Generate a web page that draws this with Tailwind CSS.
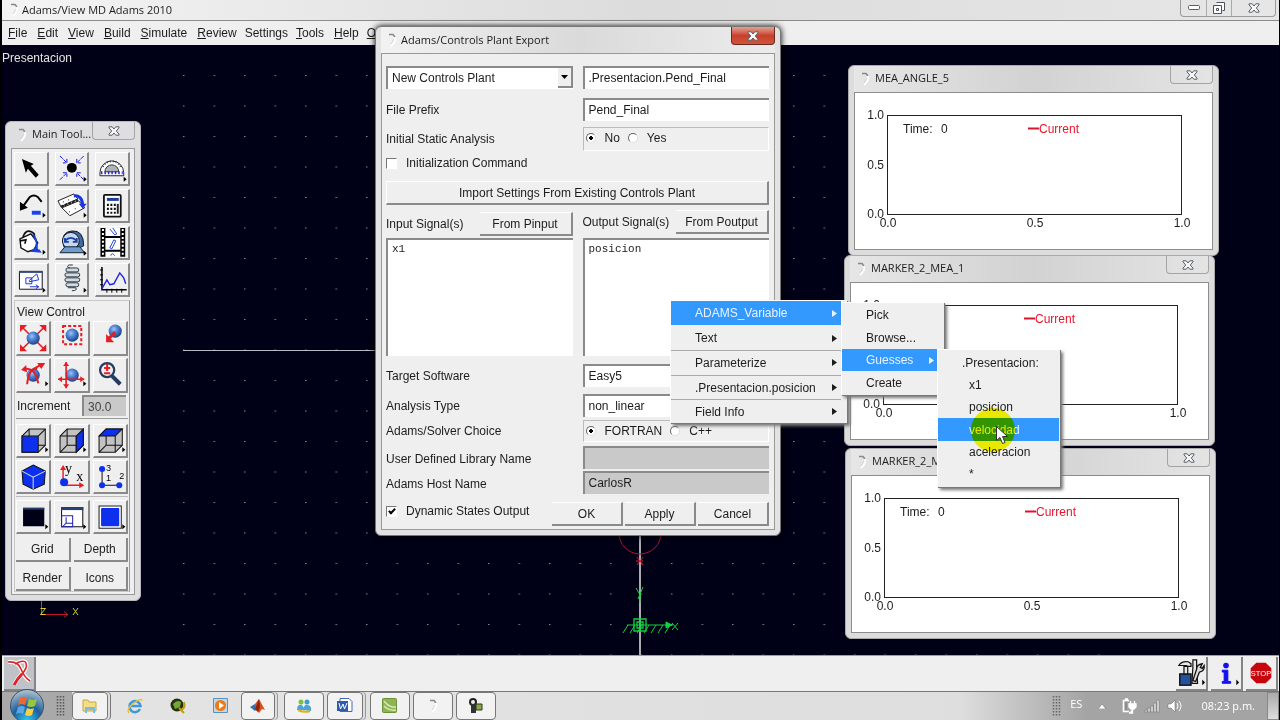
<!DOCTYPE html>
<html lang="es">
<head>
  <meta charset="UTF-8" />
  <meta name="viewport" content="width=device-width, initial-scale=1.0" />
  <title>Adams/View MD Adams 2010</title>
  <script src="https://cdn.jsdelivr.net/npm/@tailwindcss/browser@4"></script>
</head>
<body class="relative flex h-screen flex-col overflow-hidden bg-black font-['Liberation_Sans',Arial,sans-serif] text-[12px] leading-4 text-[#1c1c1c]">

  <!-- shared shapes -->
  <svg class="absolute size-0">
    <symbol id="arrow" viewBox="0 0 5 7"><path d="M0 0 L5 3.5 L0 7Z" fill="currentColor"/></symbol>
    <symbol id="close" viewBox="0 0 12 10">
      <path d="M1 .8h3.2L6 3l1.800-2.200H11v1L8.300 5 11 8.200v1H7.800L6 7 4.200 9.200H1v-1L3.700 5 1 1.800Z" fill="#f6f6f6" stroke="#5a5e66"/>
    </symbol>
    <symbol id="app" viewBox="0 0 12 14">
      <path d="M3 1.500 L7 1.500 L9 4" fill="none" stroke="#888" stroke-width="1.500"/>
      <path d="M9 4 Q10 9 5 13" fill="none" stroke="#fff" stroke-width="2"/>
      <path d="M8 6 L5 11" fill="none" stroke="#d4d4d4"/>
    </symbol>
    <radialGradient id="ball" cx=".4" cy=".35" r=".7"><stop offset="0" stop-color="#9fc4f4"/><stop offset=".4" stop-color="#4f86d6"/><stop offset="1" stop-color="#173a7c"/></radialGradient>
    <symbol id="plot" viewBox="0 0 358 156">
      <rect x="32.500" y="22.500" width="294" height="99" fill="none" stroke="#222"/>
      <g font-size="12" fill="#1c1c1c">
        <text x="29" y="26" text-anchor="end">1.0</text>
        <text x="29" y="76" text-anchor="end">0.5</text>
        <text x="29" y="125" text-anchor="end">0.0</text>
        <text x="33" y="134" text-anchor="middle">0.0</text>
        <text x="180" y="134" text-anchor="middle">0.5</text>
        <text x="327" y="134" text-anchor="middle">1.0</text>
        <text x="48" y="40">Time:</text>
        <text x="86" y="40">0</text>
      </g>
      <path d="M173 35.500h11" stroke="#d8152c" stroke-width="2"/>
      <text x="184" y="40" font-size="12" fill="#ec142c">Current</text>
    </symbol>
  </svg>

  <!-- title bar -->
  <header class="mr-px ml-[2px] flex h-[21px] shrink-0 items-center border-b border-[#8b8b8b] bg-linear-to-r from-[#f4f4f4] via-[#dcdcdc] to-[#e6e6e6] pl-1.5">
    <svg class="h-3.5 w-3"><use href="#app"/></svg>
    <h1 class="ml-[2px] font-['Open_Sans',sans-serif] text-[11px]">Adams/View MD Adams 2010</h1>
    <div class="mr-[3px] ml-auto flex h-[17px] self-start rounded-b border border-t-0 border-[#9a9a9a]">
      <button aria-label="Minimizar" class="grid w-[26px] place-items-center border-r border-[#aaa]"><svg width="12" height="6"><rect x=".5" y=".5" width="11" height="4" rx="1" fill="#fff" stroke="#5a5e66"/></svg></button>
      <button aria-label="Restaurar" class="grid w-[25px] place-items-center border-r border-[#aaa]"><svg width="12" height="12"><path d="M3.500 .5h8v8h-2M.5 3.500h8v8h-8zM3.500 6.500h2v2h-2z" fill="#fff" stroke="#4d515c"/></svg></button>
      <button aria-label="Cerrar" class="grid w-[43px] place-items-center"><svg class="h-2.5 w-3"><use href="#close"/></svg></button>
    </div>
  </header>

  <nav class="mr-px ml-[2px] flex h-6 shrink-0 items-center gap-[10px] bg-[#efefef] pb-px pl-1.5">
    <a href="#"><u>F</u>ile</a><a href="#"><u>E</u>dit</a><a href="#"><u>V</u>iew</a><a href="#"><u>B</u>uild</a><a href="#"><u>S</u>imulate</a><a href="#"><u>R</u>eview</a><a href="#" class="-mx-[2px]">Settings</a><a href="#"><u>T</u>ools</a><a href="#"><u>H</u>elp</a><a href="#" class="-ml-[2px]"><u>O</u></a>
  </nav>

  <!-- model view -->
  <main class="relative mr-px ml-[2px] min-h-0 flex-1 overflow-hidden bg-[#000016] text-[#e4e4e4]">
    <p class="pt-[5px]">Presentacion</p>
    <svg class="absolute top-0 left-0 h-full w-full">
      <defs><pattern id="grid" x="181" y="30" width="30.500" height="30.500" patternUnits="userSpaceOnUse"><rect width="1.500" height="1" fill="#85859a"/></pattern></defs>
      <rect x="181" y="30" width="917" height="590" fill="url(#grid)"/>
      <path d="M181 305.500H400" stroke="#b8b8c0"/>
      <path d="M638 480V615" stroke="#a9a9ae" stroke-width="2"/>
      <circle cx="638" cy="488" r="21" fill="none" stroke="#b0142c"/>
      <path d="M635 512l6 8m0-8l-6 8m-1-4h7" stroke="#e01c34" fill="none"/>
      <g fill="none" stroke="#12d43c">
        <path d="M634 543l3 5m4-6l-5 12M638 549v8"/>
        <path d="M625 580h46M626 580l-5 8m12-8l-5 8m12-8l-5 8m12-8l-5 8m12-8l-5 8m12-8l-5 8m12-8l-5 8"/>
        <path d="M632 574h12v12h-12zM635 577h6v6h-6zM638 574v12" stroke-width="1.300"/>
        <path d="M670 578l6 7m0-7l-6 7"/>
        <path d="M664 577l6 3-6 3z" fill="#12d43c"/>
      </g>
      <path d="M39.500 553v16" stroke="#1c9a35"/>
      <path d="M40 569.500h26m-4-3l4 3-4 3" stroke="#c01828" fill="none"/>
      <path d="M38.500 563.500h5l-5 6h5M71 563l5 7m0-7l-5 7" stroke="#d6d22c" fill="none"/>
    </svg>
  </main>

  <!-- status bar -->
  <section class="mr-px ml-[2px] flex h-9 shrink-0 items-center border-t border-[#9c9cac] bg-[#efefef] pr-px pl-[2px]">
    <button aria-label="Seleccionar" class="h-[34px] w-8 border-r-2 border-b-2 border-[#858585] bg-[#bfc2c7]">
      <svg viewBox="0 0 30 32"><path d="M4 5Q14 4 17 12 20 20 26 24M11 7Q20 2 22 6 24 11 17 18 13 22 10 28" fill="none" stroke="#fff" stroke-width="4"/><path d="M4 5Q14 4 17 12 20 20 26 24M11 7Q20 2 22 6 24 11 17 18" fill="none" stroke="#d8262c" stroke-width="1.600"/><path d="M18 17Q13 22 10 28" stroke="#d8262c" stroke-width="3" fill="none"/></svg>
    </button>
    <div class="ml-auto flex gap-[3px]">
      <button aria-label="Herramientas" class="h-[34px] w-8 border-r-2 border-b-2 border-[#858585]">
        <svg viewBox="0 0 32 32"><rect x="4" y="17" width="12" height="12" fill="#26509a" stroke="#111" stroke-width="1.500"/><path d="M8.500 9h4v8h-4zM3 8Q6 3 13 4l3 2v3h-3l-2-1H6Zm15-6h4v8l1 17h-6l1-17Z" fill="#e8e8e8" stroke="#111" stroke-width="1.300"/><path d="M30 8q1 6-5 7l-4 10-3-1 4-12q0-5 6-6l-2 4 2 1Z" fill="#ddd" stroke="#111" stroke-width="1.400"/><path d="M28 23l3 3-3 3z"/></svg>
      </button>
      <button aria-label="Información" class="h-[34px] w-8 border-r-2 border-b-2 border-[#858585]">
        <svg viewBox="0 0 32 32"><circle cx="16" cy="8" r="3" fill="#1010f0"/><path d="M12 13h6v12h3v2h-9v-2h2V15h-2z" fill="#1010f0" stroke="#1010f0"/><path d="M27 23l3 3-3 3z"/></svg>
      </button>
      <button aria-label="Stop" class="h-[34px] w-8 border-r-2 border-b-2 border-[#858585]">
        <svg viewBox="0 0 32 32"><path d="M11 5h10l6 6v10l-6 6H11l-6-6V11z" fill="#c8040c"/><text x="16" y="19" font-size="8" fill="#fff" text-anchor="middle">STOP</text></svg>
      </button>
    </div>
  </section>

  <!-- windows taskbar -->
  <footer class="mr-px ml-[2px] flex h-[29px] shrink-0 border-t border-[#777] bg-linear-to-r from-[#e4e4e4] via-[#dedede] via-75% to-[#a4a4a4] to-85% font-['Open_Sans',sans-serif]">
    <div class="flex w-[70px] shrink-0 items-center bg-[#a9a9a9] pl-2">
      <button aria-label="Inicio" class="z-10 -my-2 w-[34px]">
        <svg viewBox="0 0 34 34"><defs><radialGradient id="orb" cx=".5" cy=".95" r=".9"><stop offset="0" stop-color="#35c8f4"/><stop offset=".5" stop-color="#1c5f9c"/><stop offset="1" stop-color="#a8bccc"/></radialGradient></defs><circle cx="17" cy="17" r="16.500" fill="url(#orb)" stroke="#38536b"/><path d="M10 9q4-2 7 0l-2 7q-3-2-7 0z" fill="#ee6634"/><path d="M19 10q4 2 8 0l-2 7q-4 2-8 0z" fill="#96c83c"/><path d="M8 18q4-2 7 0l-2 7q-3-2-7 0z" fill="#58a8e8"/><path d="M17 19q4 2 7 0l-2 7q-3 2-7 0z" fill="#fcd03c"/></svg>
      </button>
      <svg class="ml-3" width="9" height="20"><path d="M1.500 0v20M4.500 0v20M7.500 0v20" stroke="#555" stroke-width="1.500" stroke-dasharray="1.500 1.500"/></svg>
    </div>
    <div class="flex gap-[3px]">
      <button aria-label="Explorador" class="grid w-9 place-items-center rounded-sm border border-[#777] bg-[#f2f2f2] shadow-[2px_0_0_#ddd,3px_0_0_#777]">
        <svg width="16" height="16"><path d="M1 2h5l1 2h7v9H1z" fill="#f4de84" stroke="#c8a848"/><path d="M3 15V9h10v6h-2v-3H5v3z" fill="#79bce4"/></svg>
      </button>
      <button aria-label="Internet Explorer" class="grid w-10 place-items-center">
        <svg class="ml-[8px]" width="16" height="16"><path d="M13 11A5.500 5.500 0 1 1 13.500 8H4" fill="none" stroke="#3c9ad8" stroke-width="2.500"/><path d="M2 15Q-1 11 7 5 15-1 15 3" fill="none" stroke="#efbf3c" stroke-width="1.500"/></svg>
      </button>
      <button aria-label="Reproductor" class="grid w-10 place-items-center">
        <svg class="ml-[8px]" width="16" height="16"><circle cx="7" cy="7" r="6.500" fill="#26320e"/><path d="M3 6q4-5 8-2l-1 5-5 2z" fill="#72a83a"/><path d="M10 12q6-1 4-8M9 10l5 5" stroke="#bd9e14" stroke-width="2" fill="none"/></svg>
      </button>
      <button aria-label="Media Player" class="grid w-10 place-items-center">
        <svg class="ml-[8px]" width="16" height="16"><path d="M.5 .5h14v14H.5z" fill="#bcd9ec" stroke="#5794bd"/><circle cx="7.500" cy="7.500" r="5.500" fill="#ee7916"/><path d="M6 4l5 3.500L6 11z" fill="#fff"/></svg>
      </button>
      <button aria-label="MATLAB" class="ml-px mr-[6px] grid w-[34px] place-items-center rounded-sm border border-[#777] bg-[#f2f2f2] shadow-[2px_0_0_#ddd,3px_0_0_#999]">
        <svg width="16" height="16"><path d="M0 9l5-3 3 4-3 3z" fill="#3a6ea8"/><path d="M5 6l4-5 6 11-3-1-3 4-4-4z" fill="#d9501c"/><path d="M9 1l1 8-2 5-3-3z" fill="#8a2413"/></svg>
      </button>
      <button aria-label="Messenger" class="grid w-10 place-items-center rounded-sm border border-[#777] bg-[#f2f2f2]">
        <svg width="16" height="16"><circle cx="5" cy="4" r="2.500" fill="#7dc142"/><circle cx="11" cy="4" r="2.500" fill="#3f9bd0"/><path d="M1 12q0-6 5-5l3 5zM7 12q1-6 5-5 4 1 3 6z" fill="#4aa6d6"/><path d="M2 12q6 3 12 1" stroke="#dcae24" stroke-width="2" fill="none"/></svg>
      </button>
      <button aria-label="Word" class="mr-[4px] grid w-9 place-items-center rounded-sm border border-[#777] bg-[#f2f2f2] shadow-[2px_0_0_#ddd,3px_0_0_#999]">
        <svg width="16" height="16"><path d="M3 .5h9l3 3v10H3z" fill="#fff" stroke="#416ab5"/><rect y="3" width="11" height="10" fill="#2f5ba8"/><path d="M2 5l1.500 6L6 6l1.500 5L10 5" stroke="#fff" fill="none"/></svg>
      </button>
      <button aria-label="Camtasia" class="grid w-10 place-items-center rounded-sm border border-[#777] bg-[#f2f2f2]">
        <svg width="16" height="16"><rect x=".5" y=".5" width="14" height="14" rx="1" fill="#8eb453" stroke="#6c9136"/><path d="M2 3q5 7 12 6M2 8q5 5 12 4" stroke="#d8e8b8" fill="none" stroke-width="1.500"/></svg>
      </button>
      <button aria-label="Adams" class="grid w-10 place-items-center rounded-sm border border-[#777] bg-[#f2f2f2]"><svg class="h-3.5 w-3"><use href="#app"/></svg></button>
      <button aria-label="Grabadora" class="grid w-10 place-items-center rounded-sm border border-[#777] bg-[#f2f2f2]">
        <svg width="16" height="16"><circle cx="5" cy="4" r="3" fill="#eee" stroke="#222" stroke-width="2"/><path d="M3 6h5v9H3z" fill="#333"/><path d="M8 6h6v6H8z" fill="#88ac3c" stroke="#333"/></svg>
      </button>
    </div>
    <div class="ml-auto flex items-center text-[11px] text-white">
      <svg width="9" height="20"><path d="M1.500 0v20M4.500 0v20M7.500 0v20" stroke="#666" stroke-width="1.500" stroke-dasharray="1.500 1.500"/></svg>
      <span class="ml-[9px] pb-1">ES</span>
      <svg class="ml-[16px]" width="8" height="5"><path d="M4 0l4 5H0z" fill="#fff" stroke="#666" stroke-width=".5"/></svg>
      <svg class="ml-[16px]" width="15" height="16"><path d="M7 2.500H1.500v11H7M3 1h3" fill="none" stroke="#fff" stroke-width="1.600"/><path d="M7 6h7v3l-2 2H9L7 9zM8.500 3v3m4-3v3M10.500 11v4H7" fill="#fff" stroke="#fff" stroke-width="1.300"/><path d="M4 4v8" stroke="#777"/></svg>
      <svg class="ml-[7px]" width="16" height="14"><path d="M1 11h2v2H1zM4 9h2v4H4zM7 7h2v6H7zM10 4h2v9h-2zM13 1h2v12h-2z" fill="#eee" stroke="#666" stroke-width=".5"/></svg>
      <svg class="ml-[7px]" width="16" height="14"><path d="M1 5h3l4-4v12L4 9H1z" fill="#fff" stroke="#666" stroke-width=".5"/><path d="M10 4q2 3 0 6M12 2q4 5 0 10" fill="none" stroke="#fff"/></svg>
      <time class="ml-[18px]">08:23 p.m.</time>
      <button aria-label="Mostrar escritorio" class="ml-[12px] h-7 w-3 border border-[#888] bg-linear-to-b from-[#aaa] to-[#ddd]"></button>
    </div>
  </footer>

  <!-- main toolbox -->
  <aside class="absolute top-[121px] left-[5px] w-[136px] rounded-md border border-[#b8b8bc] bg-[#dedee0] px-[5px] pb-[5px]">
    <div class="flex h-[26px] pl-[5px]">
      <svg class="mt-1.5 h-3.5 w-3"><use href="#app"/></svg>
      <h2 class="mt-1 ml-1 font-['Open_Sans',sans-serif] text-[11px]">Main Tool...</h2>
      <button aria-label="Cerrar" class="ml-auto grid h-[18px] w-[43px] place-items-center rounded-b border border-t-0 border-[#a4a4a4]"><svg class="h-2.5 w-3"><use href="#close"/></svg></button>
    </div>
    <div class="border border-[#999] bg-[#efefef] pt-[3px] pr-[4px] pb-[2px] pl-[2px]">
      <div class="grid grid-cols-3 gap-x-[6px] gap-y-[3px] *:h-[34px] *:border-t *:border-r-2 *:border-b-2 *:border-l *:border-t-white *:border-r-[#8a8a8a] *:border-b-[#8a8a8a] *:border-l-white">
        <button aria-label="Select"><svg viewBox="0 0 32 32"><path d="M7 6l12 5-3 2 8 9-3 3-8-9-2 4z"/></svg></button>
        <button aria-label="Point"><svg viewBox="0 0 32 32"><circle cx="16" cy="15" r="5"/><path d="M4 3l7 7m0-4v4H7M28 3l-7 7m0-4v4h4M4 27l7-7m-4 0h4v4M28 27l-7-7m4 0h-4v4" fill="none" stroke="#1414e0" stroke-dasharray="4 1"/><path d="M28 24l3 2.500-3 2.500z"/></svg></button>
        <button aria-label="Measure"><svg viewBox="0 0 32 32"><path d="M4 23V20a12 12 0 0 1 24 0v3z" fill="#fff" stroke="#223"/><path d="M9 19a7 7 0 0 1 14 0z" fill="#b0b4b8" stroke="#333"/><path d="M5 20h22" stroke="#2424d0" stroke-width="3" stroke-dasharray="1.500 2"/><path d="M7 14a10 10 0 0 1 18 0" fill="none" stroke="#444" stroke-width="2" stroke-dasharray="1 2"/><path d="M28 24l3 2.500-3 2.500z"/></svg></button>
        <button aria-label="Undo"><svg viewBox="0 0 32 32"><path d="M7 18L15 7Q19 4 23 7L27 12" fill="none" stroke="#000" stroke-width="2"/><path d="M5 12v9l8-3z"/><path d="M17 21h9v4h-9z" fill="#1846ee"/><path d="M28 23l3 2.500-3 2.500z"/></svg></button>
        <button aria-label="Joint"><svg viewBox="0 0 32 32"><path d="M6 18l17-7 6 7-15 8z" fill="#fff" stroke="#222"/><path d="M2 11l16-7 4 5-17 8z" fill="#fff" stroke="#222"/><path d="M5 17l17-7" stroke="#222" stroke-width="2.500" stroke-dasharray="3 1"/><path d="M7 12h1m4-2h1m0 12h1m5-3h1" stroke="#222"/><path d="M18 6q8-1 9 9" fill="none" stroke="#1836e4" stroke-width="3"/><path d="M23 14h8l-4 5z" fill="#1836e4"/><path d="M28 23l3 2.500-3 2.500z"/></svg></button>
        <button aria-label="Calculator"><svg viewBox="0 0 32 32"><rect x="8" y="5" width="17" height="22" rx="1" fill="#fff" stroke="#111" stroke-width="1.800"/><path d="M11 9.500h12" stroke="#203b9a" stroke-width="3"/><path d="M11 15h9M11 19h9M11 23h9" stroke="#111" stroke-width="2.200" stroke-dasharray="2 1.500"/><path d="M22 14v10" stroke="#223" stroke-width="2"/></svg></button>
        <button aria-label="Color"><svg viewBox="0 0 32 32"><path d="M5 12l11-5 7 9-4 7-6 2-7-4z" fill="#fff" stroke="#111" stroke-width="1.400"/><path d="M8 11q2-9 9-6 4 2 2 5M5 14l6-1-1 4" fill="none" stroke="#111" stroke-width="1.700"/><path d="M17 6q7 4 6 17h-3l1-7z" fill="#1a42d8"/><path d="M15 25l5-4 5 2 2 3z" fill="#1a42d8"/><path d="M28 23l3 2.500-3 2.500z"/></svg></button>
        <button aria-label="Motion"><svg viewBox="0 0 32 32"><path d="M8 20Q4 5 16 4t12 15l-6 3z" fill="#426c9f" stroke="#112"/><circle cx="15" cy="14" r="8.500" fill="#c8d8ec" stroke="#112"/><path d="M4 26l5-6h15l5 6z" fill="#719bcb" stroke="#123"/><path d="M9 14q6-6 12 0m-12-3v4h4m8-4v4h-4" fill="none" stroke="#1440a8" stroke-width="1.800"/><path d="M28 24l3 2.500-3 2.500z"/></svg></button>
        <button aria-label="Animation"><svg viewBox="0 0 32 32"><path d="M5 1h24v29H5z" fill="#fff"/><path d="M7 1v29M27 1v29" stroke="#000" stroke-width="5"/><path d="M7 2v28M27 2v28" stroke="#fff" stroke-width="2" stroke-dasharray="2 2"/><path d="M9 10h16M9 24h16" stroke="#000" stroke-width="2"/><path d="M14 2l5 6 2-1-4-6M14 21l4-8 2 1-4 8zM15 29q1-4 4 0" fill="none" stroke="#2446dd"/></svg></button>
        <button aria-label="Simulation"><svg viewBox="0 0 32 32"><path d="M4.500 7.500h23v18h-23z" fill="#fff" stroke="#112"/><path d="M4 8h24" stroke="#334a78" stroke-width="2"/><path d="M11 14h6v6h-6zM14 17l8-7 2 6-10 2M15 23h9m-3-2l3 2-3 2" fill="none" stroke="#1e36da"/><path d="M28 24l3 2.500-3 2.500z"/></svg></button>
        <button aria-label="Spring"><svg viewBox="0 0 32 32"><g fill="#d3dbe0" stroke="#2a3a44"><rect x="10" y="4" width="13" height="4" rx="2"/><rect x="9" y="9" width="15" height="4" rx="2"/><rect x="9" y="14" width="15" height="4" rx="2"/><rect x="10" y="19" width="13" height="4" rx="2"/><path d="M12 24h8q2 3-4 3M14 4q-4-1-1-3h4" fill="none"/></g><path d="M28 24l3 2.500-3 2.500z"/></svg></button>
        <button aria-label="Plotting"><svg viewBox="0 0 32 32"><path d="M6 3v23h25" fill="none" stroke="#000" stroke-width="1.500"/><path d="M4 6h3M4 11h3M4 16h3M4 21h3m4 4v4m5-4v4m5-4v4m5-4v4" stroke="#000"/><path d="M6 25l5-9 3 5 4-1 6-11 4 5 2 6" fill="none" stroke="#1c22dd" stroke-width="1.400"/></svg></button>
      </div>
      <div class="mt-[3px] border border-[#c8c8c8] border-r-[#999] px-px">
        <h3 class="mt-[3px] h-[17px] pl-px">View Control</h3>
        <div class="grid grid-cols-3 gap-x-[3px] gap-y-[2px] *:h-[35px] *:border-t *:border-r-2 *:border-b-2 *:border-l *:border-t-white *:border-r-[#8a8a8a] *:border-b-[#8a8a8a] *:border-l-white">
          <button aria-label="Fit"><svg viewBox="0 0 32 32"><g stroke="#e81c24" stroke-width="1.600" fill="none"><path d="M4 4l24 24M28 4L4 28"/></g><path d="M3 3h7l-7 7zM29 3h-7l7 7zM3 29h7l-7-7zM29 29h-7l7-7z" fill="#e81c24"/><circle cx="16" cy="16" r="6.500" fill="url(#ball)"/></svg></button>
          <button aria-label="Fit selected"><svg viewBox="0 0 32 32"><rect x="8" y="4" width="18" height="18" fill="none" stroke="#e81c24" stroke-width="2" stroke-dasharray="3 2"/><circle cx="17" cy="13" r="6.500" fill="url(#ball)"/></svg></button>
          <button aria-label="Center"><svg viewBox="0 0 32 32"><circle cx="21" cy="9" r="6.500" fill="url(#ball)"/><path d="M21 10l-7 7" stroke="#e81c24" stroke-width="3"/><path d="M12 12v8h8z" fill="#e81c24"/></svg></button>
          <button aria-label="Rotate"><svg viewBox="0 0 32 32"><circle cx="16" cy="16" r="6.500" fill="url(#ball)"/><path d="M10 25Q12 8 20 10M6 10Q18 7 21 24M16 10l9-5" fill="none" stroke="#e81c24" stroke-width="2"/><path d="M4 11l5-5 1 7zM20 4h8l-4 6z" fill="#e81c24"/><path d="M28 22l3 2.500-3 2.500z"/></svg></button>
          <button aria-label="Translate"><svg viewBox="0 0 32 32"><circle cx="17" cy="16" r="6.500" fill="url(#ball)"/><path d="M11 3v26M3 20h26" stroke="#e81c24" stroke-width="1.600"/><path d="M8 7l3-4 3 4zm0 18l3 4 3-4zM7 17l-4 3 4 3zm18 0l4 3-4 3z" fill="#e81c24"/><path d="M28 22l3 2.500-3 2.500z"/></svg></button>
          <button aria-label="Zoom"><svg viewBox="0 0 32 32"><path d="M18 17l8 8" stroke="#243c62" stroke-width="4"/><circle cx="13" cy="11" r="7" fill="#eee" stroke="#243c62" stroke-width="2.200"/><path d="M13 5v7m-3-3h6M10 14h6" stroke="#e81c24" stroke-width="2"/></svg></button>
        </div>
        <div class="mt-[2px] flex items-center justify-between border-b border-[#999] pr-[2px] pb-[2px] pl-px">
          <label for="inc">Increment</label>
          <input id="inc" value="30.0" class="h-[21px] w-[44px] border-t-2 border-l-2 border-[#8a8a8a] bg-[#c9c9c9] pl-[4px] text-[#444]" />
        </div>
        <div class="mt-[5px] grid grid-cols-3 gap-x-[3px] gap-y-[2px] border-b border-[#bbb] pb-[2px] *:h-[34px] *:border-t *:border-r-2 *:border-b-2 *:border-l *:border-t-white *:border-r-[#8a8a8a] *:border-b-[#8a8a8a] *:border-l-white">
          <button aria-label="Front"><svg viewBox="0 0 32 32"><path d="M5 11l7-7h16v16l-7 7H5z" fill="#c2c2c2" stroke="#111"/><path d="M21 11l7-7M12 4v16h16" fill="none" stroke="#111"/><path d="M5 11h16v16H5z" fill="#0c30ee" stroke="#111"/><path d="M28 22l3 2.500-3 2.500z"/></svg></button>
          <button aria-label="Right"><svg viewBox="0 0 32 32"><path d="M5 11l7-7h16v16l-7 7H5z" fill="#c2c2c2" stroke="#111"/><path d="M5 11h16v16M12 4v16h16M5 27l7-7" fill="none" stroke="#111"/><path d="M21 11l7-7v16l-7 7z" fill="#0c30ee" stroke="#111"/><path d="M28 22l3 2.500-3 2.500z"/></svg></button>
          <button aria-label="Top"><svg viewBox="0 0 32 32"><path d="M5 11l7-7h16v16l-7 7H5z" fill="#c2c2c2" stroke="#111"/><path d="M21 11v16M12 4v16h16M5 27l7-7" fill="none" stroke="#111"/><path d="M5 11l7-7h16l-7 7z" fill="#0c30ee" stroke="#111"/><path d="M28 22l3 2.500-3 2.500z"/></svg></button>
          <button aria-label="Iso"><svg viewBox="0 0 32 32"><path d="M16 4l12 6-1 13-11 5-10-5-1-13z" fill="#0c30ee" stroke="#111"/><path d="M5 10l11 6 12-6M16 16v12" fill="none" stroke="#cde"/></svg></button>
          <button aria-label="Orient"><svg viewBox="0 0 32 32"><path d="M8 22V6m0 18h18" stroke="#e81c24" stroke-width="1.400"/><path d="M5 9l3-5 3 5zm19 12l5 3-5 3z" fill="#e81c24"/><circle cx="9" cy="21" r="4" fill="#0c30ee"/><text x="10" y="12" font-family="Liberation Serif" font-size="14">y</text><text x="21" y="20" font-family="Liberation Serif" font-size="14">x</text></svg></button>
          <button aria-label="Points"><svg viewBox="0 0 32 32"><path d="M8 8v16h16" fill="none" stroke="#111"/><g fill="#0c30ee"><circle cx="8" cy="8" r="3"/><circle cx="8" cy="24" r="3"/><circle cx="25" cy="24" r="3"/></g><g font-size="9"><text x="12" y="10">3</text><text x="12" y="20">1</text><text x="25" y="18">2</text></g></svg></button>
        </div>
        <div class="mt-[3px] grid grid-cols-3 gap-x-[3px] *:h-[34px] *:border-t *:border-r-2 *:border-b-2 *:border-l *:border-t-white *:border-r-[#8a8a8a] *:border-b-[#8a8a8a] *:border-l-white">
          <button aria-label="Background"><svg viewBox="0 0 32 32"><path d="M6 7h21v18H6z" fill="#000016"/><path d="M6 7.500h21" stroke="#27416e" stroke-width="2"/><path d="M28 23l3 2.500-3 2.500z"/></svg></button>
          <button aria-label="Layout"><svg viewBox="0 0 32 32"><path d="M6.500 6.500h21v19h-21z" fill="#fff" stroke="#111"/><path d="M6 7.500h22" stroke="#27416e" stroke-width="3"/><path d="M6.500 14.500h11v11h-11zM11 16v6h6m-6 0l-3 3" fill="none" stroke="#2020b0"/><path d="M28 23l3 2.500-3 2.500z"/></svg></button>
          <button aria-label="Toggle"><svg viewBox="0 0 32 32"><path d="M5 5h22v22H5z" fill="#fff" stroke="#222"/><rect x="7" y="7" width="18" height="18" rx="1" fill="#0c30ee"/><path d="M28 23l3 2.500-3 2.500z"/></svg></button>
        </div>
        <div class="mt-[4px] grid grid-cols-2 gap-x-[3px] *:h-6 *:border-r-2 *:border-b-2 *:border-[#8a8a8a]">
          <button>Grid</button><button>Depth</button>
          <button class="mt-[5px]">Render</button><button class="mt-[5px]">Icons</button>
        </div>
      </div>
    </div>
  </aside>

  <!-- measures -->
  <section class="absolute top-[65px] left-[848px] w-[371px] rounded-md border border-[#aaa] bg-[#dcdcdc] px-[5px] pb-[5px]">
    <div class="flex h-[26px] bg-linear-to-r from-[#e6e6e6] via-[#d2d2d2] to-[#e4e4e4] pl-[5px]">
      <svg class="mt-1.5 h-3.5 w-3"><use href="#app"/></svg>
      <h2 class="mt-1 ml-1 font-['Open_Sans',sans-serif] text-[11px]">MEA_ANGLE_5</h2>
      <button aria-label="Cerrar" class="ml-auto grid h-[18px] w-[43px] place-items-center rounded-b border border-t-0 border-[#a4a4a4]"><svg class="h-2.5 w-3"><use href="#close"/></svg></button>
    </div>
    <div class="h-[158px] border border-[#8c8c8c] bg-white"><svg class="h-[156px] w-[358px]"><use href="#plot"/></svg></div>
  </section>
  <section class="absolute top-[255px] left-[844px] w-[371px] rounded-md border border-[#aaa] bg-[#dcdcdc] px-[5px] pb-[5px]">
    <div class="flex h-[26px] bg-linear-to-r from-[#e6e6e6] via-[#d2d2d2] to-[#e4e4e4] pl-[5px]">
      <svg class="mt-1.5 h-3.5 w-3"><use href="#app"/></svg>
      <h2 class="mt-1 ml-1 font-['Open_Sans',sans-serif] text-[11px]">MARKER_2_MEA_1</h2>
      <button aria-label="Cerrar" class="ml-auto grid h-[18px] w-[43px] place-items-center rounded-b border border-t-0 border-[#a4a4a4]"><svg class="h-2.5 w-3"><use href="#close"/></svg></button>
    </div>
    <div class="h-[158px] border border-[#8c8c8c] bg-white"><svg class="h-[156px] w-[358px]"><use href="#plot"/></svg></div>
  </section>
  <section class="absolute top-[448px] left-[845px] w-[371px] rounded-md border border-[#aaa] bg-[#dcdcdc] px-[5px] pb-[5px]">
    <div class="flex h-[26px] bg-linear-to-r from-[#e6e6e6] via-[#d2d2d2] to-[#e4e4e4] pl-[5px]">
      <svg class="mt-1.5 h-3.5 w-3"><use href="#app"/></svg>
      <h2 class="mt-1 ml-1 font-['Open_Sans',sans-serif] text-[11px]">MARKER_2_MEA_2</h2>
      <button aria-label="Cerrar" class="ml-auto grid h-[18px] w-[43px] place-items-center rounded-b border border-t-0 border-[#a4a4a4]"><svg class="h-2.5 w-3"><use href="#close"/></svg></button>
    </div>
    <div class="h-[158px] border border-[#8c8c8c] bg-white"><svg class="h-[156px] w-[358px]"><use href="#plot"/></svg></div>
  </section>

  <!-- plant export dialog -->
  <form class="absolute top-[26px] left-[375px] w-[406px] rounded-md border border-[#777] bg-[#e2e2e2] px-[5px] pb-[5px] shadow-[0_0_6px_#000]">
    <div class="flex h-[26px] bg-linear-to-r from-[#f2f2f2] via-[#dadada] to-[#ececec] pl-[5px]">
      <svg class="mt-1.5 h-3.5 w-3"><use href="#app"/></svg>
      <h2 class="mt-[5px] ml-[3px] font-['Open_Sans',sans-serif] text-[11px]">Adams/Controls Plant Export</h2>
      <button type="button" aria-label="Cerrar" class="ml-auto grid h-[18px] w-[44px] place-items-center rounded-b border border-t-0 border-[#6a2a22] bg-linear-to-b from-[#e0a193] via-[#c8402c] to-[#d0543a]"><svg class="h-2.5 w-3"><use href="#close"/></svg></button>
    </div>
    <div class="border border-[#999] bg-[#efefef] pt-[12px] pr-[5px] pb-[3px] pl-[4px]">
      <div class="grid grid-cols-2 items-center gap-x-[10px]">
        <div class="relative">
          <select aria-label="Plant" class="block h-[23px] w-full appearance-none border-t-2 border-l-2 border-[#8a8a8a] bg-white pb-[2px] pl-[4px]"><option>New Controls Plant</option></select>
          <span class="pointer-events-none absolute top-[2px] right-0 grid h-[20px] w-[15px] place-items-center border-r-2 border-b-2 border-[#8a8a8a] bg-[#efefef]"><svg width="7" height="4"><path d="M0 0h7L3.500 4z"/></svg></span>
        </div>
        <input aria-label="Plant name" value=".Presentacion.Pend_Final" class="h-[23px] border-t-2 border-l-2 border-[#8a8a8a] bg-white pb-[2px] pl-[4px]" />
      </div>
      <div class="mt-[9px] grid grid-cols-2 items-center gap-x-[10px]">
        <label for="prefix">File Prefix</label>
        <input id="prefix" value="Pend_Final" class="h-[23px] border-t-2 border-l-2 border-[#8a8a8a] bg-white pb-[2px] pl-[4px]" />
      </div>
      <div class="mt-[6px] grid grid-cols-2 items-center gap-x-[10px]">
        <span>Initial Static Analysis</span>
        <div class="flex h-[24px] items-center border border-t-[#bbb] border-r-white border-b-white border-l-[#bbb] pb-[2px] pl-[2px]">
          <label class="flex items-center gap-[9px]"><input type="radio" name="static" checked class="size-[10px] appearance-none rounded-full border border-t-[#666] border-r-[#ddd] border-b-[#ddd] border-l-[#666] bg-white checked:bg-[radial-gradient(circle,#000_2px,#fff_2px)]" />No</label>
          <label class="ml-[8px] flex items-center gap-[9px]"><input type="radio" name="static" class="size-[10px] appearance-none rounded-full border border-t-[#666] border-r-[#ddd] border-b-[#ddd] border-l-[#666] bg-white checked:bg-[radial-gradient(circle,#000_2px,#fff_2px)]" />Yes</label>
        </div>
      </div>
      <label class="mt-[4px] flex w-fit items-center gap-[9px]"><input type="checkbox" class="size-[11px] appearance-none border border-t-[#777] border-r-white border-b-white border-l-[#777] bg-white" />Initialization Command</label>
      <button type="button" class="mt-[10px] block h-[24px] w-full border-t border-r-2 border-b-2 border-l border-t-white border-r-[#8a8a8a] border-b-[#8a8a8a] border-l-white">Import Settings From Existing Controls Plant</button>
      <div class="mt-[5px] grid grid-cols-2 gap-x-[10px]">
        <div class="flex items-center justify-between pt-[2px]">
          <label for="in">Input Signal(s)</label>
          <button type="button" class="h-[24px] w-[93px] border-t border-r-2 border-b-2 border-t-white border-r-[#8a8a8a] border-b-[#8a8a8a]">From Pinput</button>
        </div>
        <div class="flex items-center justify-between pb-[2px]">
          <label for="out">Output Signal(s)</label>
          <button type="button" class="h-[24px] w-[93px] border-t border-r-2 border-b-2 border-t-white border-r-[#8a8a8a] border-b-[#8a8a8a]">From Poutput</button>
        </div>
        <textarea id="in" class="mt-[2px] h-[118px] resize-none border-t-2 border-l-2 border-[#8a8a8a] bg-white pt-px pl-[4px] font-['Liberation_Mono',monospace] text-[11px]">x1</textarea>
        <textarea id="out" class="mt-[2px] h-[118px] resize-none border-t-2 border-l-2 border-[#8a8a8a] bg-white pt-px pl-[4px] font-['Liberation_Mono',monospace] text-[11px]">posicion</textarea>
      </div>
      <div class="mt-[8px] grid grid-cols-2 items-center gap-x-[10px]">
        <label for="target">Target Software</label>
        <input id="target" value="Easy5" class="h-[23px] border-t-2 border-l-2 border-[#8a8a8a] bg-white pb-[2px] pl-[4px]" />
      </div>
      <div class="mt-[7px] grid grid-cols-2 items-center gap-x-[10px]">
        <label for="type">Analysis Type</label>
        <input id="type" value="non_linear" class="h-[23px] border-t-2 border-l-2 border-[#8a8a8a] bg-white pb-[2px] pl-[4px]" />
      </div>
      <div class="mt-[3px] grid grid-cols-2 items-center gap-x-[10px]">
        <span>Adams/Solver Choice</span>
        <div class="flex h-[22px] items-center border border-t-[#bbb] border-r-white border-b-white border-l-[#bbb] pl-[2px]">
          <label class="flex items-center gap-[9px]"><input type="radio" name="solver" checked class="size-[10px] appearance-none rounded-full border border-t-[#666] border-r-[#ddd] border-b-[#ddd] border-l-[#666] bg-white checked:bg-[radial-gradient(circle,#000_2px,#fff_2px)]" />FORTRAN</label>
          <label class="ml-[8px] flex items-center gap-[9px]"><input type="radio" name="solver" class="size-[10px] appearance-none rounded-full border border-t-[#666] border-r-[#ddd] border-b-[#ddd] border-l-[#666] bg-white checked:bg-[radial-gradient(circle,#000_2px,#fff_2px)]" />C++</label>
        </div>
      </div>
      <div class="mt-[4px] grid grid-cols-2 items-center gap-x-[10px] gap-y-[2px]">
        <label for="lib" class="pt-[2px]">User Defined Library Name</label>
        <input id="lib" class="h-[23px] border-t-2 border-l-2 border-[#8a8a8a] bg-[#c9c9c9] pb-[2px] pl-[4px]" />
        <label for="host" class="pt-[2px]">Adams Host Name</label>
        <input id="host" value="CarlosR" class="h-[23px] border-t-2 border-l-2 border-[#8a8a8a] bg-[#c9c9c9] pb-[2px] pl-[4px]" />
      </div>
      <div class="mt-[8px] flex items-center">
        <label class="flex items-center gap-[9px] pb-[6px]"><input type="checkbox" checked class="size-[11px] appearance-none border border-t-[#777] border-r-white border-b-white border-l-[#777] bg-white checked:after:block checked:after:h-[7px] checked:after:w-[4px] checked:after:translate-x-[3px] checked:after:rotate-45 checked:after:border-r-2 checked:after:border-b-2 checked:after:border-black" />Dynamic States Output</label>
        <div class="ml-auto flex gap-[2px] *:h-[24px] *:w-[71px] *:border-t *:border-r-2 *:border-b-2 *:border-t-white *:border-r-[#8a8a8a] *:border-b-[#8a8a8a]">
          <button type="button">OK</button><button type="button">Apply</button><button type="button">Cancel</button>
        </div>
      </div>
    </div>
  </form>

  <!-- context menus -->
  <div role="menu" class="absolute top-[300px] left-[670px] w-[177px] border-t border-l border-t-white border-l-white bg-[#efefef] pr-[6px] shadow-[1px_1px_0_#777,3px_3px_3px_#777] *:flex *:h-6 *:w-full *:items-center *:justify-between *:pr-1 *:pl-6">
    <button role="menuitem" class="bg-[#3399ff] text-[#e8f2ff]">ADAMS_Variable<svg class="h-[7px] w-[5px]"><use href="#arrow"/></svg></button>
    <button role="menuitem" class="mt-px">Text<svg class="h-[7px] w-[5px]"><use href="#arrow"/></svg></button>
    <button role="menuitem" class="border-t border-[#aaa]">Parameterize<svg class="h-[7px] w-[5px]"><use href="#arrow"/></svg></button>
    <button role="menuitem" class="mt-px border-t border-[#aaa]">.Presentacion.posicion<svg class="h-[7px] w-[5px]"><use href="#arrow"/></svg></button>
    <button role="menuitem" class="border-t border-[#aaa]">Field Info<svg class="h-[7px] w-[5px]"><use href="#arrow"/></svg></button>
  </div>
  <div role="menu" class="absolute top-[302px] left-[841px] w-[103px] border-t border-l border-white bg-[#efefef] pt-px pr-[6px] pb-px shadow-[1px_1px_0_#777,3px_3px_3px_#777] *:flex *:w-full *:items-center *:justify-between *:pr-1 *:pl-6">
    <button role="menuitem" class="h-[22px]">Pick</button>
    <button role="menuitem" class="h-[23px]">Browse...</button>
    <button role="menuitem" class="h-[22px] bg-[#3399ff] text-[#e8f2ff]">Guesses<svg class="h-[7px] w-[5px]"><use href="#arrow"/></svg></button>
    <button role="menuitem" class="h-[23px]">Create</button>
  </div>
  <div role="menu" class="absolute top-[349px] left-[937px] w-[123px] border-t border-l border-white bg-[#efefef] pt-[2px] pr-px pb-[2px] shadow-[1px_1px_0_#777,3px_3px_3px_#777] *:flex *:w-full *:items-center *:pl-[31px]">
    <div class="h-[22px]"><span class="-ml-[7px]">.Presentacion:</span></div>
    <button role="menuitem" class="h-[22px]">x1</button>
    <button role="menuitem" class="h-[22px]">posicion</button>
    <button role="menuitem" class="h-[23px] bg-[#3399ff] text-[#e8f2ff]">velocidad</button>
    <button role="menuitem" class="h-[22px]">aceleracion</button>
    <button role="menuitem" class="h-[22px]">*</button>
  </div>
  <div class="pointer-events-none absolute top-[408px] left-[971px] size-11 rounded-full bg-[#f8f800] mix-blend-multiply"></div>
  <svg class="pointer-events-none absolute top-[426px] left-[996px] h-[19px] w-[12px]" viewBox="0 0 12 19"><path d="M.5 .5v14l3.500-3 2.500 6 2.500-1-2.500-6h5z" fill="#fff" stroke="#333"/></svg>
</body>
</html>
